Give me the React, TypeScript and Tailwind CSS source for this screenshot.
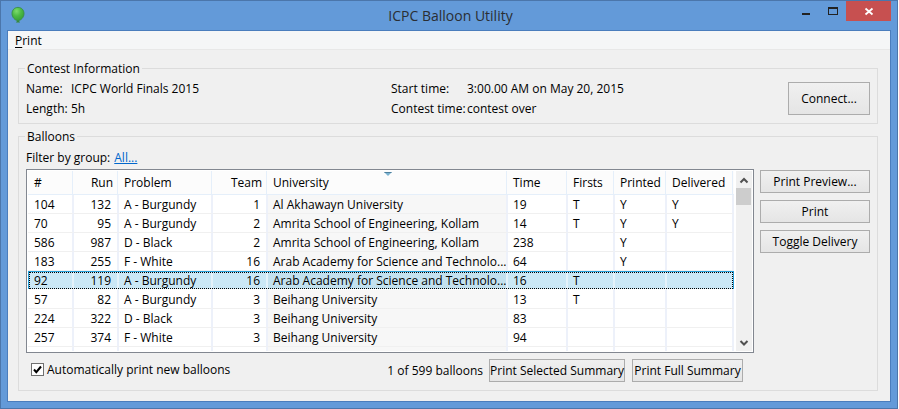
import { useState, type ReactNode } from 'react';

type Balloon = {
  id: number;
  run: number;
  problem: string;
  team: number;
  university: string;
  time: number;
  first?: boolean;
  printed?: boolean;
  delivered?: boolean;
};

const balloons: Balloon[] = [
  { id: 104, run: 132, problem: 'A - Burgundy', team: 1, university: 'Al Akhawayn University', time: 19, first: true, printed: true, delivered: true },
  { id: 70, run: 95, problem: 'A - Burgundy', team: 2, university: 'Amrita School of Engineering, Kollam', time: 14, first: true, printed: true, delivered: true },
  { id: 586, run: 987, problem: 'D - Black', team: 2, university: 'Amrita School of Engineering, Kollam', time: 238, printed: true },
  { id: 183, run: 255, problem: 'F - White', team: 16, university: 'Arab Academy for Science and Technolo...', time: 64, printed: true },
  { id: 92, run: 119, problem: 'A - Burgundy', team: 16, university: 'Arab Academy for Science and Technolo...', time: 16, first: true },
  { id: 57, run: 82, problem: 'A - Burgundy', team: 3, university: 'Beihang University', time: 13, first: true },
  { id: 224, run: 322, problem: 'D - Black', team: 3, university: 'Beihang University', time: 83 },
  { id: 257, run: 374, problem: 'F - White', team: 3, university: 'Beihang University', time: 94 },
];

const columns = [
  { title: '#', width: 'w-[46px]', align: 'text-left pl-1.5' },
  { title: 'Run', width: 'w-[45px]', align: 'text-right pr-1.5' },
  { title: 'Problem', width: 'w-[94px]', align: 'text-left pl-[5px]' },
  { title: 'Team', width: 'w-[55px]', align: 'text-right pr-1.5' },
  { title: 'University', width: '', align: 'text-left pl-[5px]' },
  { title: 'Time', width: 'w-[60px]', align: 'text-left pl-[5px]' },
  { title: 'Firsts', width: 'w-[47px]', align: 'text-left pl-[5px]' },
  { title: 'Printed', width: 'w-[52px]', align: 'text-left pl-[5px]' },
  { title: 'Delivered', width: 'w-[67px]', align: 'text-left pl-[5px]' },
];

function PushButton({ className = '', children }: { className?: string; children: ReactNode }) {
  return (
    <button
      type="button"
      className={`flex items-center justify-center whitespace-nowrap border border-[#acacac] bg-linear-to-b from-[#f0f0f0] to-[#e5e5e5] ${className}`}
    >
      {children}
    </button>
  );
}

function Group({ title, children }: { title: string; children: ReactNode }) {
  return (
    <fieldset className="min-w-0 border border-[#dcdcdc] px-[7px]">
      <legend className="-ml-px h-[17px] px-0.5 leading-[17px]">{title}</legend>
      {children}
    </fieldset>
  );
}

function BalloonIcon() {
  return (
    <svg width="16" height="18" viewBox="0 0 16 18" aria-hidden="true">
      <defs>
        <radialGradient id="balloon" cx="0.38" cy="0.28" r="0.75">
          <stop offset="0" stopColor="#7ddc6c" />
          <stop offset="0.5" stopColor="#4dba45" />
          <stop offset="1" stopColor="#36a035" />
        </radialGradient>
      </defs>
      <path d="M8 13.5 L5.9 16.4 H10.1 Z" fill="#37893c" />
      <path
        d="M8 1.4 C11.8 1.4 14 4.3 14 7.6 C14 11.2 11 14.6 8 14.6 C5 14.6 2 11.2 2 7.6 C2 4.3 4.2 1.4 8 1.4 Z"
        fill="url(#balloon)"
        stroke="#389043"
        strokeWidth="0.9"
      />
    </svg>
  );
}

function TitleBar() {
  return (
    <header className="flex h-[29px] items-start">
      <div className="flex-1 pt-[5px] pl-[3px]">
        <BalloonIcon />
      </div>
      <h1 className="text-[14px] leading-[30px] text-[#2a2e33]">ICPC Balloon Utility</h1>
      <div className="flex flex-1 justify-end">
        <button type="button" aria-label="Minimize" className="flex h-5 w-[27px] justify-center">
          <svg width="27" height="20" shapeRendering="crispEdges">
            <rect x="10" y="12" width="8" height="2" fill="#222" />
          </svg>
        </button>
        <button type="button" aria-label="Maximize" className="flex h-5 w-[27px] justify-center">
          <svg width="27" height="20" shapeRendering="crispEdges">
            <path d="M9 6h10v8h-10z M10 8v5h8v-5z" fill="#222" fillRule="evenodd" />
          </svg>
        </button>
        <button type="button" aria-label="Close" className="flex h-5 w-[45px] justify-center bg-[#c75050]">
          <svg width="45" height="20">
            <path d="M19.5 7.5 L26.5 13.5 M26.5 7.5 L19.5 13.5" stroke="#fff" strokeWidth="1.8" />
          </svg>
        </button>
      </div>
    </header>
  );
}

function Field({ name, labelWidth, value }: { name: string; labelWidth: string; value: string }) {
  return (
    <div className="flex h-5 items-center">
      <dt className={labelWidth}>{name}</dt>
      <dd>{value}</dd>
    </div>
  );
}

function ScrollBar() {
  return (
    <div className="flex w-4 flex-col bg-[#f0f0f0]">
      <button type="button" aria-label="Scroll up" className="h-[17px]">
        <svg width="16" height="17">
          <path d="M4.5 11.5 L8 8 L11.5 11.5" fill="none" stroke="#505050" strokeWidth="2" />
        </svg>
      </button>
      <div className="h-[17px] w-[15px] bg-[#cdcdcd]" />
      <div className="flex-1" />
      <button type="button" aria-label="Scroll down" className="h-[17px]">
        <svg width="16" height="17">
          <path d="M4.5 7 L8 10.5 L11.5 7" fill="none" stroke="#505050" strokeWidth="2" />
        </svg>
      </button>
    </div>
  );
}

function BalloonTable() {
  const [selected, setSelected] = useState(92);
  const flag = (on: boolean | undefined, mark: string) => (on ? mark : '');

  return (
    <div className="flex h-[184px] border border-[#828790] bg-white p-px">
      <div className="min-w-0 flex-1 overflow-hidden pr-0.5">
        <table className="w-full table-fixed border-separate border-spacing-0">
          <colgroup>
            {columns.map((c) => (
              <col key={c.title} className={c.width} />
            ))}
          </colgroup>
          <thead>
            <tr className="h-6">
              {columns.map((c) => (
                <th
                  key={c.title}
                  scope="col"
                  className={`relative border-b border-[#e5effa] bg-[#fcfcfc] p-0 font-normal ${c.align}`}
                >
                  {c.title}
                  <span className="absolute top-0 right-px h-full w-px bg-[#e5effa]" />
                  {c.title === 'University' && (
                    <svg className="absolute top-px left-1/2 -ml-1" width="8" height="4">
                      <path d="M0 0 H8 L4 4 Z" fill="#7ab3d2" />
                      <path d="M0 0 H8 L7 1 H1 Z" fill="#4f7f9c" />
                    </svg>
                  )}
                </th>
              ))}
            </tr>
          </thead>
          <tbody>
            {balloons.map((b) => {
              const on = b.id === selected;
              const values = [
                b.id,
                b.run,
                b.problem,
                b.team,
                b.university,
                b.time,
                flag(b.first, 'T'),
                flag(b.printed, 'Y'),
                flag(b.delivered, 'Y'),
              ];
              return (
                <tr key={b.id} className="relative h-[19px]" onClick={() => setSelected(b.id)}>
                  {values.map((v, i) => (
                    <td
                      key={columns[i].title}
                      className={`overflow-hidden border-r-2 border-b pt-0.5 pb-0 leading-4 whitespace-nowrap ${columns[i].align} ${
                        on
                          ? `border-r-[#e4f2fa] border-b-white ${i === 4 ? 'bg-[#c3e1ef]' : 'bg-[#cbe8f6]'}`
                          : `border-r-[#edf1fa] border-b-[#f0f0f0] ${i === 4 ? 'bg-[#f7f7f7]' : ''}`
                      }`}
                    >
                      {v}
                      {on && i === 0 && (
                        <span className="pointer-events-none absolute inset-x-0 top-0 bottom-px border-x border-t border-[#26a0da]">
                          <span className="block h-full border border-dotted border-black" />
                        </span>
                      )}
                    </td>
                  ))}
                </tr>
              );
            })}
            <tr className="h-[19px]">
              {columns.map((c, i) => (
                <td key={c.title} className={`border-r-2 border-[#edf1fa] p-0 ${i === 4 ? 'bg-[#f7f7f7]' : ''}`} />
              ))}
            </tr>
          </tbody>
        </table>
      </div>
      <ScrollBar />
    </div>
  );
}

export default function App() {
  return (
    <div className="bg-white pr-px font-['Open_Sans','Noto_Sans',sans-serif] text-[12px] text-black">
      <div className="border border-[#4b76ab] bg-[#639ad9] px-1.5 pb-1.5">
        <TitleBar />
        <div className="border border-[#4a7dbd] bg-[#f0f0f0]">
          <nav className="flex h-[19px] items-center border-b border-[#e8e8e8] bg-[#f5f6f7] pl-[7px]">
            <button type="button" className="pt-0.5 leading-4">
              <span className="underline underline-offset-2">P</span>rint
            </button>
          </nav>
          <main className="space-y-1 py-2.5 pr-3 pl-2.5">
            <Group title="Contest Information">
              <div className="flex items-start pt-0.5 pb-1">
                <dl className="mr-8 grid flex-1 grid-cols-2">
                  <Field name="Name:" labelWidth="w-[45px]" value="ICPC World Finals 2015" />
                  <Field name="Start time:" labelWidth="w-[76px]" value="3:00.00 AM on May 20, 2015" />
                  <Field name="Length:" labelWidth="w-[45px]" value="5h" />
                  <Field name="Contest time:" labelWidth="w-[76px]" value="contest over" />
                </dl>
                <PushButton className="mt-[3px] h-[33px] w-[82px]">Connect...</PushButton>
              </div>
            </Group>
            <Group title="Balloons">
              <div className="flex h-6 items-center gap-1 pt-0.5">
                <span>Filter by group:</span>
                <a href="#groups" className="text-[#0066cc] underline">
                  All...
                </a>
              </div>
              <div className="flex gap-1.5">
                <div className="min-w-0 flex-1">
                  <BalloonTable />
                  <div className="flex items-center pt-1.5 pr-[11px] pb-2 pl-[5px]">
                    <label className="flex items-center gap-[3px] pb-0.5">
                      <span className="relative flex">
                        <input
                          type="checkbox"
                          defaultChecked
                          className="peer size-[13px] appearance-none border border-[#707070] bg-white"
                        />
                        <svg
                          className="pointer-events-none absolute inset-0 hidden peer-checked:block"
                          width="13"
                          height="13"
                        >
                          <path d="M3 6.5 L5.3 9.2 L10 3.5" fill="none" stroke="#000" strokeWidth="2" />
                        </svg>
                      </span>
                      Automatically print new balloons
                    </label>
                    <span className="mr-1.5 ml-auto">1 of 599 balloons</span>
                    <PushButton className="mr-[7px] h-[23px] w-[136px]">Print Selected Summary</PushButton>
                    <PushButton className="h-[23px] w-[111px]">Print Full Summary</PushButton>
                  </div>
                </div>
                <div className="flex w-[110px] flex-col gap-[7px] pt-px">
                  <PushButton className="h-[23px]">Print Preview...</PushButton>
                  <PushButton className="h-[23px]">Print</PushButton>
                  <PushButton className="h-[23px]">Toggle Delivery</PushButton>
                </div>
              </div>
            </Group>
          </main>
        </div>
      </div>
    </div>
  );
}
